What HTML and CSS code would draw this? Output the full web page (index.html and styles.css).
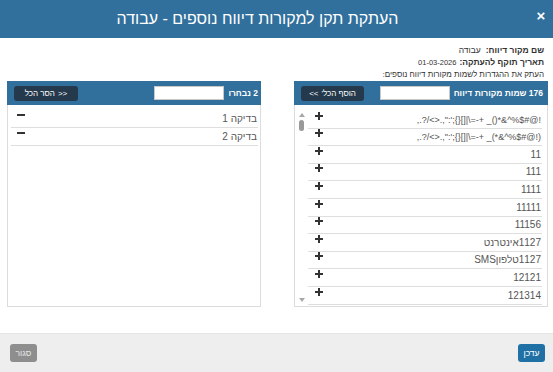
FILE: index.html
```html
<!DOCTYPE html>
<html lang="he" dir="rtl">
<head>
<meta charset="utf-8">
<title>העתקת תקן</title>
<link rel="stylesheet" href="styles.css">
</head>
<body>
<div class="modal">
  <div class="modal-header">
    <span class="close">×</span>
    <h1 class="title">העתקת תקן למקורות דיווח נוספים - עבודה</h1>
  </div>
  <div class="modal-body">
    <div class="info">
      <div class="info-line"><b>שם מקור דיווח:</b><span class="val">עבודה</span></div>
      <div class="info-line line-date"><b>תאריך תוקף להעתקה:</b><span class="val date">01-03-2026</span></div>
      <div class="info-line small">העתק את ההגדרות לשמות מקורות דיווח נוספים:</div>
    </div>
    <div class="panels">
      <div class="panel panel-source">
        <div class="panel-header">
          <span class="panel-title">176 שמות מקורות דיווח</span>
          <input class="search" type="text">
          <button class="bulk"><span>הוסף הכל'</span><span class="arrows" dir="ltr">&lt;&lt;</span></button>
        </div>
        <div class="panel-body">
          <ul class="list">
            <li class="row"><span class="name">!@#$%^&amp;*()_ +-=\|[]{};':",.&lt;&gt;/?.,</span><span class="icon plus"></span></li>
            <li class="row"><span class="name">(!@#$%^&amp;*)_ +-=\|[]{};':",.&lt;&gt;/?.,</span><span class="icon plus"></span></li>
            <li class="row"><span class="name">11</span><span class="icon plus"></span></li>
            <li class="row"><span class="name">111</span><span class="icon plus"></span></li>
            <li class="row"><span class="name">1111</span><span class="icon plus"></span></li>
            <li class="row"><span class="name">11111</span><span class="icon plus"></span></li>
            <li class="row"><span class="name">11156</span><span class="icon plus"></span></li>
            <li class="row"><span class="name">1127אינטרנט</span><span class="icon plus"></span></li>
            <li class="row"><span class="name">1127טלפוןSMS</span><span class="icon plus"></span></li>
            <li class="row"><span class="name">12121</span><span class="icon plus"></span></li>
            <li class="row"><span class="name">121314</span><span class="icon plus"></span></li>
          </ul>
          <div class="scroll">
            <span class="arrow up"></span>
            <span class="thumb"></span>
            <span class="track"></span>
            <span class="arrow down"></span>
          </div>
        </div>
      </div>
      <div class="panel panel-target">
        <div class="panel-header">
          <span class="panel-title">2 נבחרו</span>
          <input class="search" type="text">
          <button class="bulk"><span class="arrows" dir="ltr">&gt;&gt;</span><span>הסר הכל</span></button>
        </div>
        <div class="panel-body">
          <ul class="list list-target">
            <li class="row"><span class="name">בדיקה 1</span><span class="icon minus"></span></li>
            <li class="row"><span class="name">בדיקה 2</span><span class="icon minus"></span></li>
          </ul>
        </div>
      </div>
    </div>
  </div>
  <div class="modal-footer">
    <button class="btn btn-primary">עדכן</button>
    <button class="btn btn-default">סגור</button>
  </div>
</div>
</body>
</html>
```
FILE: styles.css
```css
html, body {
  margin: 0;
  padding: 0;
}
body {
  width: 553px;
  height: 372px;
  overflow: hidden;
  font-family: "Liberation Sans", Arial, sans-serif;
  background: #fff;
  color: #333;
}
.modal {
  display: flex;
  flex-direction: column;
  height: 372px;
}
.modal-header {
  height: 38px;
  flex: none;
  background: #31709c;
  color: #fff;
  display: flex;
  align-items: center;
}
.close {
  width: 24px;
  text-align: center;
  font-size: 15px;
  font-weight: bold;
  line-height: 1;
  margin-top: -8px;
}
.title {
  flex: 1;
  margin: 0;
  padding-right: 14px;
  text-align: center;
  font-size: 16px;
  font-weight: normal;
  line-height: 20px;
}
.modal-body {
  flex: 1;
  display: flex;
  flex-direction: column;
}
.info {
  padding: 6px 9px 0 0;
  font-size: 8.5px;
  line-height: 12px;
  color: #333;
}
.info-line b {
  font-weight: bold;
}
.line-date {
  line-height: 13px;
}
.val {
  margin-right: 5px;
}
.date {
  font-size: 7.5px;
  margin-right: 3px;
}
.small {
  font-size: 8px;
  line-height: 11px;
}
.panels {
  display: flex;
  gap: 33px;
  padding: 1px 5px 0 7px;
}
.panel {
  flex: 1;
  height: 226px;
  border: 1px solid #dcdcdc;
  border-top: none;
  display: flex;
  flex-direction: column;
  box-sizing: border-box;
}
.panel-header {
  height: 24px;
  flex: none;
  background: #31709c;
  color: #fff;
  display: flex;
  align-items: center;
  gap: 4px;
  padding: 0 5px 0 7px;
  margin: 0 -1px;
}
.panel-target .panel-header {
  padding-right: 3px;
}
.panel-title {
  font-size: 8.5px;
  font-weight: bold;
  white-space: nowrap;
}
.search {
  width: 70px;
  height: 14px;
  box-sizing: border-box;
  border: 1px solid #c8c8c8;
  background: #fff;
  padding: 0;
  margin: 0;
}
.bulk {
  margin: 0 auto 0 0;
  height: 15px;
  width: 63px;
  padding: 0;
  border: none;
  border-radius: 3px;
  background: #25394c;
  color: #fff;
  font-family: "Liberation Sans", Arial, sans-serif;
  font-size: 8px;
  line-height: 15px;
  white-space: nowrap;
  display: flex;
  justify-content: center;
  align-items: center;
  gap: 3px;
}
.panel-target .bulk {
  width: 64px;
}
.panel-body {
  flex: 1;
  display: flex;
  min-height: 0;
}
.list {
  flex: 1;
  list-style: none;
  margin: 0;
  padding: 6px 5px 0 0;
}
.list-target {
  padding: 5px 2px 0 3px;
}
.row {
  height: 17.6px;
  box-sizing: border-box;
  border-bottom: 1px solid #dedede;
  display: flex;
  justify-content: space-between;
  align-items: flex-end;
  padding: 0 1px 2px 7px;
}
.list-target .row {
  height: 18px;
  padding-left: 6px;
}
.name {
  font-size: 10px;
  line-height: 12px;
  color: #555;
  white-space: nowrap;
}
.row:nth-child(-n+2) .name {
  font-size: 9px;
}
.list-target .row .name {
  font-size: 10px;
}
.icon {
  position: relative;
  width: 8px;
  height: 8px;
  margin-bottom: 6px;
  flex: none;
}
.plus::before,
.plus::after,
.minus::before {
  content: "";
  position: absolute;
  background: #333;
}
.plus::before {
  left: 0;
  top: 3px;
  width: 8px;
  height: 2px;
}
.plus::after {
  left: 3px;
  top: 0;
  width: 2px;
  height: 8px;
}
.minus::before {
  left: 0;
  top: 3px;
  width: 8px;
  height: 2px;
}
.scroll {
  width: 13px;
  flex: none;
  display: flex;
  flex-direction: column;
  align-items: center;
  padding: 8px 0 4px;
  box-sizing: border-box;
}
.arrow {
  width: 0;
  height: 0;
  border-left: 3px solid transparent;
  border-right: 3px solid transparent;
}
.arrow.up {
  border-bottom: 4px solid #a8a8a8;
}
.arrow.down {
  border-top: 4px solid #a8a8a8;
}
.thumb {
  width: 5px;
  height: 11px;
  margin-top: 3px;
  border-radius: 3px;
  background: #9a9a9a;
}
.track {
  flex: 1;
}
.modal-footer {
  height: 39px;
  flex: none;
  background: #eeeeee;
  border-top: 1px solid #e6e6e6;
  box-sizing: border-box;
  display: flex;
  justify-content: space-between;
  align-items: center;
  padding: 0 8px 0 10px;
}
.btn {
  height: 18px;
  width: 27px;
  padding: 0;
  border: none;
  border-radius: 3px;
  font-family: "Liberation Sans", Arial, sans-serif;
  font-size: 8.5px;
  line-height: 18px;
}
.btn-primary {
  background: #1f71a5;
  color: #fff;
}
.btn-default {
  background: #8e8e8e;
  color: #e6e6e6;
}
```
